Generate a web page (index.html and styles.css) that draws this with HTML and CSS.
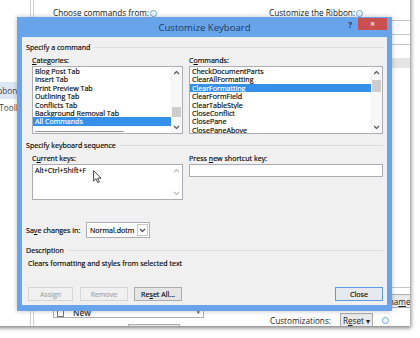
FILE: index.html
```html
<!DOCTYPE html>
<html lang="en">
<head>
    <meta charset="UTF-8">
    <meta name="viewport" content="width=device-width, initial-scale=1.0">
    <title>Customize Keyboard</title>
    <link rel="stylesheet" href="styles.css">
</head>
<body>
    <div class="screen">

        <!-- Word Options window, behind the dialog -->
        <div class="options">
            <div class="nav">
                <div class="nav-item selected">Customize Ribbon</div>
                <div class="nav-item">Quick Access Toolbar</div>
            </div>
            <div class="main">
                <div class="col-left">
                    <div class="caption"><u>C</u>hoose commands from:<span class="info">i</span></div>
                    <div class="cmd-list">
                        <div class="cmd-row"><span class="cmd-icon"></span>New<span class="cmd-arrow">&#9662;</span></div>
                    </div>
                    <div class="kbd-row"><span class="small-btn">Customize...</span></div>
                </div>
                <div class="col-right">
                    <div class="caption">Customize the Ri<u>b</u>bon:<span class="info">i</span></div>
                    <div class="drop"></div>
                    <div class="tree">
                        <div class="tree-row"></div>
                        <div class="tree-row sel"></div>
                    </div>
                    <div class="btn-row">
                        <span class="small-btn wide">New Tab</span>
                        <span class="small-btn wide">New Group</span>
                        <span class="small-btn wide">Rena<u>m</u>e...</span>
                    </div>
                    <div class="reset-row">
                        <span class="reset-label">Customizations:</span>
                        <span class="small-btn reset">R<u>e</u>set &#9662;</span>
                        <span class="info">i</span>
                    </div>
                </div>
            </div>
        </div>

        <!-- Customize Keyboard dialog -->
        <div class="dialog">
            <div class="titlebar">
                <span></span>
                <span class="title">Customize Keyboard</span>
                <div class="title-buttons">
                    <span class="help">?</span>
                    <span class="close-x">&#10005;</span>
                </div>
            </div>
            <div class="dialog-body">
                <div class="group">Specify a command</div>
                <div class="cols">
                    <div>
                        <div class="label"><u>C</u>ategories:</div>
                        <div class="listbox">
                            <div class="items">
                                <div class="item">Blog Post Tab</div>
                                <div class="item">Insert Tab</div>
                                <div class="item">Print Preview Tab</div>
                                <div class="item">Outlining Tab</div>
                                <div class="item">Conflicts Tab</div>
                                <div class="item">Background Removal Tab</div>
                                <div class="item sel">All Commands</div>
                                <div class="item dashes">-----------------------------------------------</div>
                            </div>
                            <div class="scroll">
                                <div class="arrow"><svg width="7" height="5" viewBox="0 0 7 5"><path d="M1 4 L3.5 1.5 L6 4" fill="none" stroke="#555" stroke-width="1.1"/></svg></div>
                                <div class="track"><div class="thumb thumb-cat"></div></div>
                                <div class="arrow"><svg width="7" height="5" viewBox="0 0 7 5"><path d="M1 1 L3.5 3.5 L6 1" fill="none" stroke="#555" stroke-width="1.1"/></svg></div>
                            </div>
                        </div>
                    </div>
                    <div>
                        <div class="label">C<u>o</u>mmands:</div>
                        <div class="listbox">
                            <div class="items">
                                <div class="item">CheckDocumentParts</div>
                                <div class="item">ClearAllFormatting</div>
                                <div class="item sel">ClearFormatting</div>
                                <div class="item">ClearFormField</div>
                                <div class="item">ClearTableStyle</div>
                                <div class="item">CloseConflict</div>
                                <div class="item">ClosePane</div>
                                <div class="item">ClosePaneAbove</div>
                            </div>
                            <div class="scroll">
                                <div class="arrow"><svg width="7" height="5" viewBox="0 0 7 5"><path d="M1 4 L3.5 1.5 L6 4" fill="none" stroke="#555" stroke-width="1.1"/></svg></div>
                                <div class="track"><div class="thumb thumb-cmd"></div></div>
                                <div class="arrow"><svg width="7" height="5" viewBox="0 0 7 5"><path d="M1 1 L3.5 3.5 L6 1" fill="none" stroke="#555" stroke-width="1.1"/></svg></div>
                            </div>
                        </div>
                    </div>
                </div>

                <div class="group group-keys">Specify keyboard sequence</div>
                <div class="cols">
                    <div>
                        <div class="label">C<u>u</u>rrent keys:</div>
                        <div class="keysbox">
                            <div class="keys">Alt+Ctrl+Shift+F</div>
                            <div class="scroll faded">
                                <div class="arrow"><svg width="7" height="5" viewBox="0 0 7 5"><path d="M1 4 L3.5 1.5 L6 4" fill="none" stroke="#bbb" stroke-width="1.1"/></svg></div>
                                <div class="track"></div>
                                <div class="arrow"><svg width="7" height="5" viewBox="0 0 7 5"><path d="M1 1 L3.5 3.5 L6 1" fill="none" stroke="#bbb" stroke-width="1.1"/></svg></div>
                            </div>
                        </div>
                    </div>
                    <div>
                        <div class="label">Press <u>n</u>ew shortcut key:</div>
                        <div class="field"></div>
                    </div>
                </div>

                <div class="save-row">
                    <span class="save-label">Sa<u>v</u>e changes in:</span>
                    <div class="combo">
                        <span class="combo-text">Normal.dotm</span>
                        <span class="combo-arrow"><svg width="7" height="5" viewBox="0 0 7 5"><path d="M1 1 L3.5 3.5 L6 1" fill="none" stroke="#444" stroke-width="1.1"/></svg></span>
                    </div>
                </div>

                <div class="group group-desc">Description</div>
                <div class="desc">Clears formatting and styles from selected text</div>

                <div class="buttons">
                    <span class="btn disabled btn-assign">Assign</span>
                    <span class="btn disabled btn-remove">Remove</span>
                    <span class="btn btn-reset">Re<u>s</u>et All...</span>
                    <span class="btn default btn-close">Close</span>
                </div>
            </div>
        </div>

        <!-- mouse pointer -->
        <svg class="cursor" width="9" height="14" viewBox="0 0 9 14">
            <path d="M0.6 0.6 L0.6 11 L3 8.7 L4.7 12.6 L6.3 11.9 L4.7 8.2 L8 8.2 Z" fill="#fff" stroke="#333" stroke-width="0.9" stroke-linejoin="round"/>
        </svg>
    </div>
</body>
</html>
```

FILE: styles.css
```css
/* Customize Keyboard screenshot */
body {
    margin: 0;
    background-color: #fff;
    font-family: "Open Sans", "Noto Sans", sans-serif;
    font-size: 7.1px;
    color: #000;
}

u {
    text-decoration-thickness: 0.5px;
    text-underline-offset: 1px;
}

.screen {
    position: relative;
    width: 420px;
    height: 338px;
    overflow: hidden;
}

/* ---- background Word Options window ---- */
.options {
    width: 470px;
    height: 336px;
    margin: -10px 0 0 -60px;
    background-color: #fff;
    display: flex;
    overflow: hidden;
    font-size: 8.2px;
    color: #222;
    box-shadow: 1px 2px 4px rgba(0, 0, 0, 0.5);
}

.nav {
    width: 91px;
    flex-shrink: 0;
    box-sizing: border-box;
    border-right: 1px solid #d4d4d4;
    margin-right: 2px;
    padding-top: 92px;
}

.nav-item {
    height: 17px;
    line-height: 17px;
    padding-left: 8px;
    white-space: nowrap;
    color: #444;
}

.nav-item.selected {
    background-color: #dde7f4;
}

.main {
    flex: 1;
    border-left: 1px solid #d4d4d4;
    padding: 18px 0 0 19px;
    display: flex;
    gap: 65px;
}

.col-left {
    width: 151px;
    flex-shrink: 0;
}

.col-right {
    width: 200px;
    flex-shrink: 0;
}

.caption {
    height: 10px;
    line-height: 10px;
    white-space: nowrap;
}

.info {
    display: inline-block;
    width: 5px;
    height: 5px;
    line-height: 5px;
    margin-left: 1px;
    border: 1px solid #6aa0dc;
    border-radius: 50%;
    color: #6aa0dc;
    font-size: 4px;
    text-align: center;
    vertical-align: middle;
}

.cmd-list {
    margin-top: 27px;
    height: 273px;
    box-sizing: border-box;
    border: 1px solid #abadb3;
    display: flex;
    flex-direction: column;
    justify-content: flex-end;
}

.cmd-row {
    height: 9px;
    line-height: 9px;
    display: flex;
    align-items: center;
    padding-left: 3px;
    font-weight: 600;
    color: #333;
}

.cmd-icon {
    width: 5px;
    height: 6px;
    border: 1px solid #777;
    margin-right: 9px;
}

.cmd-arrow {
    margin-left: auto;
    margin-right: 3px;
    font-size: 5px;
    color: #555;
}

.kbd-row {
    margin-top: 6px;
    padding-left: 75px;
}

.small-btn {
    display: inline-flex;
    align-items: center;
    justify-content: center;
    height: 14px;
    box-sizing: border-box;
    padding: 0 4px;
    border: 1px solid #adadad;
    background-color: #e9e9e9;
    white-space: nowrap;
}

.kbd-row .small-btn {
    width: 52px;
}

.drop {
    margin-top: 2px;
    height: 15px;
    box-sizing: border-box;
    border: 1px solid #c6c6c6;
}

.tree {
    margin-top: 9px;
    height: 244px;
    box-sizing: border-box;
    border: 1px solid #c6c6c6;
    padding-top: 12px;
}

.tree-row {
    height: 1px;
}

.tree-row.sel {
    height: 10px;
    background-color: #e4e4e4;
}

.btn-row {
    margin-top: 6px;
    display: flex;
    gap: 2px;
}

.btn-row .wide {
    width: 50px;
}

.reset-row {
    margin-top: 5px;
    display: flex;
    align-items: center;
    gap: 8px;
    padding-left: 1px;
}

.reset-label {
    width: 62px;
}

.small-btn.reset {
    width: 33px;
    padding: 0;
}

/* ---- Customize Keyboard dialog ---- */
.dialog {
    position: absolute;
    left: 17px;
    top: 17px;
    width: 375px;
    height: 294px;
    box-sizing: border-box;
    padding: 0 5px 6px 5px;
    background-color: #67a4ea;
    display: flex;
    flex-direction: column;
    box-shadow: 0 0 5px rgba(0, 0, 0, 0.25);
}

.titlebar {
    height: 20px;
    flex-shrink: 0;
    display: grid;
    grid-template-columns: 1fr auto 1fr;
    align-items: center;
}

.title {
    font-size: 9.6px;
    color: #1d3a66;
    padding-top: 1px;
}

.title-buttons {
    justify-self: end;
    align-self: start;
    display: flex;
    align-items: center;
}

.help {
    font-size: 8px;
    font-weight: 700;
    color: #1d3a66;
    margin-right: 6px;
    margin-top: 2px;
}

.close-x {
    width: 29px;
    height: 12px;
    margin-top: 1px;
    background-color: #c9504f;
    color: #fff;
    font-size: 6px;
    font-weight: 700;
    display: flex;
    align-items: center;
    justify-content: center;
}

.dialog-body {
    flex: 1;
    background-color: #f0f0f0;
    padding: 5px 4px 4px 4px;
    display: flex;
    flex-direction: column;
    -webkit-text-stroke: 0.15px currentColor;
}

.group {
    height: 10px;
    line-height: 10px;
    display: flex;
    align-items: center;
    gap: 4px;
    white-space: nowrap;
}

.group::after {
    content: '';
    flex: 1;
    border-top: 1px solid #dcdcdc;
}

.group-keys {
    margin-top: 6px;
}

.group-desc {
    margin-top: 7px;
}

.cols {
    display: grid;
    grid-template-columns: 151px 1fr;
    gap: 6px;
    margin: 3px 0 0 6px;
}

.label {
    height: 10px;
    line-height: 10px;
    white-space: nowrap;
}

.listbox {
    margin-top: 1px;
    height: 68px;
    box-sizing: border-box;
    border: 1px solid #abadb3;
    background-color: #fff;
    display: flex;
}

.items {
    flex: 1;
    overflow: hidden;
}

.item {
    height: 8.4px;
    line-height: 8.4px;
    padding-left: 2px;
    white-space: nowrap;
    overflow: hidden;
}

.item.sel {
    background-color: #3590ec;
    color: #fff;
}

.item.dashes {
    letter-spacing: -0.4px;
    color: #333;
}

.scroll {
    width: 11px;
    flex-shrink: 0;
    display: flex;
    flex-direction: column;
    background-color: #f7f7f7;
}

.scroll.faded {
    background-color: #fff;
}

.arrow {
    height: 11px;
    display: flex;
    align-items: center;
    justify-content: center;
}

.track {
    flex: 1;
}

.thumb {
    margin: 0 1px;
    background-color: #cdcdcd;
}

.thumb-cat {
    margin-top: 29px;
    height: 10px;
}

.thumb-cmd {
    margin-top: 2px;
    height: 12px;
}

.keysbox {
    margin-top: 1px;
    height: 36px;
    box-sizing: border-box;
    border: 1px solid #abadb3;
    background-color: #fff;
    display: flex;
}

.keys {
    flex: 1;
    padding: 1px 0 0 2px;
    line-height: 9px;
}

.field {
    margin-top: 1px;
    height: 13px;
    box-sizing: border-box;
    border: 1px solid #abadb3;
    background-color: #fff;
}

.save-row {
    margin-top: 22px;
    height: 16px;
    display: flex;
    align-items: center;
}

.save-label {
    width: 60px;
}

.combo {
    width: 64px;
    height: 16px;
    box-sizing: border-box;
    border: 1px solid #abadb3;
    background-color: #fff;
    display: flex;
    align-items: center;
}

.combo-text {
    flex: 1;
    padding-left: 3px;
}

.combo-arrow {
    width: 11px;
    height: 12px;
    margin-right: 1px;
    box-sizing: border-box;
    border: 1px solid #c9c9c9;
    display: flex;
    align-items: center;
    justify-content: center;
}

.desc {
    margin-top: 3px;
    padding-left: 2px;
    height: 10px;
    line-height: 10px;
}

.buttons {
    margin-top: auto;
    display: flex;
    height: 14px;
}

.btn {
    height: 14px;
    width: 48px;
    box-sizing: border-box;
    border: 1px solid #adadad;
    background-color: #e5e5e5;
    display: flex;
    align-items: center;
    justify-content: center;
}

.btn.disabled {
    border-color: #d5d5d5;
    background-color: #f0f0f0;
    color: #a6a6a6;
}

.btn-assign {
    width: 45px;
    margin-left: 2px;
}

.btn-remove {
    margin-left: 7px;
}

.btn-reset {
    margin-left: 6px;
}

.btn-close {
    margin-left: auto;
}

.btn.default {
    border-color: #5b9be3;
    background-color: #e6e9ee;
}

.cursor {
    position: absolute;
    left: 93px;
    top: 170px;
}
```
